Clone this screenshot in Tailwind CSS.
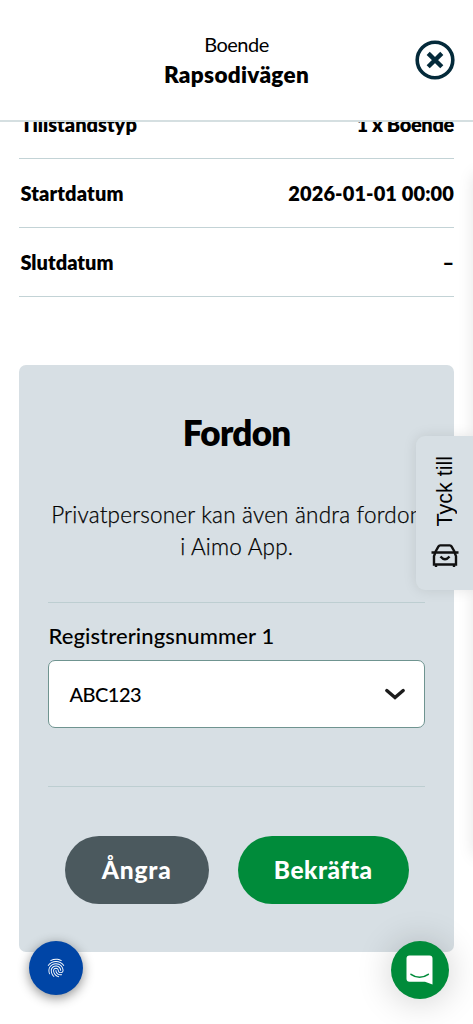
<!DOCTYPE html>
<html lang="sv">
<head>
<meta charset="utf-8">
<meta name="viewport" content="width=device-width, initial-scale=1">
<title>Boende – Rapsodivägen</title>
<script src="https://cdn.jsdelivr.net/npm/@tailwindcss/browser@4"></script>
</head>
<body class="bg-white font-['Lato',sans-serif] text-black">
<div class="relative flex h-[1024px] w-full flex-col overflow-hidden">
  <header class="relative z-10 flex h-[122px] shrink-0 flex-col items-center border-b-2 border-[#d5dfe1] bg-white pt-[29px] whitespace-nowrap">
    <p class="text-[20px] leading-[30px] tracking-[-0.5px]"><span>Boende</span></p>
    <h1 class="text-[22.5px] leading-[31px] font-extrabold tracking-[0.3px]"><span>Rapsodivägen</span></h1>
    <button class="absolute top-[40px] right-[18.500px]" aria-label="Stäng">
      <svg class="block" width="40" height="40" viewBox="0 0 40 40" fill="none" stroke="#042a3a"><circle cx="20" cy="20" r="17.800" stroke-width="3.600"/><path d="M13.200 13.400 26.800 26.800M26.800 13.400 13.200 26.800" stroke-width="4.400"/></svg>
    </button>
  </header>
  <main class="-mt-[32px] flex flex-col pr-[19px] pl-[19.400px]">
    <dl class="text-[20px] font-extrabold whitespace-nowrap">
      <div class="flex h-[69px] items-center justify-between border-b border-[#c3d3d6]"><dt class="pl-px"><span>Tillståndstyp</span></dt><dd class="tracking-[-0.35px]"><span>1 x Boende</span></dd></div>
      <div class="flex h-[69px] items-center justify-between border-b border-[#c3d3d6]"><dt class="pl-px tracking-[0.15px]"><span>Startdatum</span></dt><dd class="tracking-[0.1px]"><span>2026-01-01 00:00</span></dd></div>
      <div class="flex h-[69px] items-center justify-between border-b border-[#c3d3d6]"><dt class="pl-px"><span>Slutdatum</span></dt><dd><span>–</span></dd></div>
    </dl>
    <section class="mt-[68px] flex h-[587px] flex-col rounded-[7px] bg-[#d7dfe4] px-[29px] pt-[41px]">
      <h2 class="text-center text-[35px] leading-[52px] font-extrabold tracking-[-0.7px]"><span>Fordon</span></h2>
      <p class="mt-[41px] text-center text-[22.5px] leading-[32px] font-light tracking-[0.2px] whitespace-nowrap [-webkit-text-stroke:0.25px_#000]"><span>Privatpersoner kan även ändra fordon</span><br><span>i Aimo App.</span></p>
      <div class="mt-[39px] border-t border-[#bdced1] pt-[17px]">
        <label class="block text-[22px] leading-[32px] font-medium tracking-[0.1px] whitespace-nowrap"><span>Registreringsnummer 1</span></label>
        <div class="mt-[8px] flex h-[68px] items-center justify-between rounded-[7px] border border-[#6f9490] bg-white pr-[18px] pl-[20px] text-[20px] font-medium">
          <span class="tracking-[-0.5px]">ABC123</span>
          <svg width="22" height="14" viewBox="0 0 22 14" fill="none" stroke="#1c1c1c" stroke-width="3.400" stroke-linecap="round"><path d="M2.800 3.500 11 10.600 19.200 3.500"/></svg>
        </div>
      </div>
      <div class="mt-[58px] flex justify-center gap-[29px] border-t border-[#bdced1] pt-[49px] text-[24.500px] font-black text-white">
        <button class="h-[68px] w-[144px] rounded-full bg-[#4b595e] tracking-[0.8px]"><span>Ångra</span></button>
        <button class="h-[68px] w-[171px] rounded-full bg-[#008b3a] tracking-[0.5px]"><span>Bekräfta</span></button>
      </div>
    </section>
  </main>
  <div class="absolute top-[175px] left-[475px] h-[680px] w-[100px] shadow-[0_0_16px_rgba(0,0,0,0.13)]"></div>
  <aside class="absolute top-[436px] right-0 flex h-[154px] w-[57px] flex-col items-center rounded-l-[9px] bg-[#d7dfe4] pt-[20px] font-['Liberation_Sans',sans-serif] shadow-[0_0_14px_rgba(0,0,0,0.1)]">
    <span class="rotate-180 text-[21.500px] leading-[28px] whitespace-nowrap [writing-mode:vertical-rl]">Tyck till</span>
    <svg class="mt-[18px]" width="28" height="24" viewBox="0 0 28 24" fill="none" stroke="#111" stroke-width="2.400"><path d="M4 8.500 7.500 2.300Q8 1.400 9.200 1.400h9.600q1.200 0 1.700.9L24 8.500M.5 8.500h27M4.200 9 3 12.200v8.300h22v-8.300L23.800 9M5 20v3M23 20v3"/><path d="M9.500 12.500q4.500 5.500 9 0"/></svg>
  </aside>
  <button class="absolute top-[941px] left-[29px] flex size-[54px] items-center justify-center rounded-full bg-[#0045a6] shadow-[0_3px_12px_rgba(0,0,0,0.45)]" aria-label="Integritet">
    <svg width="22" height="22" viewBox="0 0 24 24" fill="#fff"><path d="M17.81 4.47c-.08 0-.16-.02-.23-.06C15.66 3.42 14 3 12.01 3c-1.98 0-3.86.47-5.57 1.41-.24.13-.54.04-.68-.2-.13-.24-.04-.55.2-.68C7.82 2.52 9.86 2 12.01 2c2.13 0 3.99.47 6.03 1.52.25.13.34.43.21.67-.09.18-.26.28-.44.28zM3.5 9.72c-.1 0-.2-.03-.29-.09-.23-.16-.28-.47-.12-.7.99-1.4 2.25-2.5 3.75-3.27C9.98 4.04 14 4.03 17.15 5.65c1.5.77 2.76 1.86 3.75 3.25.16.22.11.54-.12.7-.23.16-.54.11-.7-.12-.9-1.26-2.04-2.25-3.39-2.94-2.87-1.47-6.54-1.47-9.4.01-1.36.7-2.5 1.7-3.4 2.96-.08.14-.23.21-.39.21zm6.25 12.07c-.13 0-.26-.05-.35-.15-.87-.87-1.34-1.43-2.01-2.64-.69-1.23-1.05-2.73-1.05-4.34 0-2.97 2.54-5.39 5.66-5.39s5.66 2.42 5.66 5.39c0 .28-.22.5-.5.5s-.5-.22-.5-.5c0-2.42-2.09-4.39-4.66-4.39-2.57 0-4.66 1.97-4.66 4.39 0 1.44.32 2.77.93 3.85.64 1.15 1.08 1.64 1.85 2.42.19.2.19.51 0 .71-.11.1-.24.15-.37.15zm7.17-1.85c-1.19 0-2.24-.3-3.1-.89-1.49-1.01-2.38-2.65-2.38-4.39 0-.28.22-.5.5-.5s.5.22.5.5c0 1.41.72 2.74 1.94 3.56.71.48 1.54.71 2.54.71.24 0 .64-.03 1.04-.1.27-.05.53.13.58.41.05.27-.13.53-.41.58-.57.11-1.07.12-1.21.12zM14.91 22c-.04 0-.09-.01-.13-.02-1.59-.44-2.63-1.03-3.72-2.1-1.4-1.39-2.17-3.24-2.17-5.22 0-1.62 1.38-2.94 3.08-2.94 1.7 0 3.08 1.32 3.08 2.94 0 1.07.93 1.94 2.08 1.94s2.08-.87 2.08-1.94c0-3.77-3.25-6.83-7.25-6.83-2.84 0-5.44 1.58-6.61 4.03-.39.81-.59 1.76-.59 2.8 0 .78.07 2.01.67 3.61.1.26-.03.55-.29.64-.26.1-.55-.04-.64-.29-.49-1.31-.73-2.61-.73-3.96 0-1.2.23-2.29.68-3.24 1.33-2.79 4.28-4.6 7.51-4.6 4.55 0 8.25 3.51 8.25 7.83 0 1.62-1.38 2.94-3.08 2.94s-3.08-1.32-3.08-2.94c0-1.07-.93-1.94-2.08-1.94s-2.08.87-2.08 1.94c0 1.71.66 3.31 1.87 4.51.95.94 1.86 1.46 3.27 1.85.27.07.42.35.35.61-.05.23-.26.38-.47.38z"/></svg>
  </button>
  <button class="absolute top-[941px] left-[391px] flex size-[58px] items-center justify-center rounded-full bg-[#008b3a] shadow-[0_2px_36px_rgba(0,0,0,0.2)]" aria-label="Chatt">
    <svg width="28" height="30" viewBox="0 0 28 30"><path d="M3.500.5h20a3 3 0 0 1 3 3v26l-7.500-2.700H3.500A3 3 0 0 1 .5 23.800V3.500A3 3 0 0 1 3.500.5z" fill="#fff"/><path d="M5 19.300q8.500 6 17.300 0" fill="none" stroke="#008b3a" stroke-width="1.600" stroke-linecap="round"/></svg>
  </button>
</div>
</body>
</html>
